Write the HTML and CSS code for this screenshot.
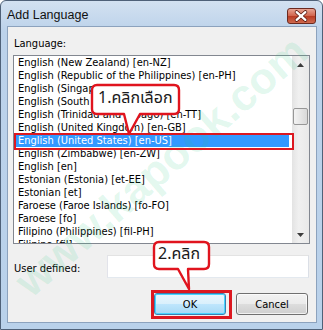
FILE: index.html
```html
<!DOCTYPE html>
<html lang="en">
<head>
  <meta charset="UTF-8">
  <title>Add Language</title>
  <meta name="viewport" content="width=device-width, initial-scale=1.0">
  <link rel="stylesheet" href="styles.css">
</head>
<body>
  <div class="window">
    <div class="titlebar">
      <span class="title">Add Language</span>
      <span class="close-btn">
        <svg width="29" height="16" viewBox="0 0 29 16">
          <path d="M10 4 L19 12 M19 4 L10 12" stroke="#5a1a12" stroke-width="4" stroke-linecap="round"/>
          <path d="M10 4 L19 12 M19 4 L10 12" stroke="#fff" stroke-width="2.4" stroke-linecap="round"/>
        </svg>
      </span>
    </div>

    <div class="client">
      <div class="field-label">Language:</div>
      <div class="listbox">
        <ul class="items">
          <li>English (New Zealand) [en-NZ]</li>
          <li>English (Republic of the Philippines) [en-PH]</li>
          <li>English (Singapore) [en-SG]</li>
          <li>English (South Africa) [en-ZA]</li>
          <li>English (Trinidad and Tobago) [en-TT]</li>
          <li>English (United Kingdom) [en-GB]</li>
          <li class="selected">English (United States) [en-US]</li>
          <li>English (Zimbabwe) [en-ZW]</li>
          <li>English [en]</li>
          <li>Estonian (Estonia) [et-EE]</li>
          <li>Estonian [et]</li>
          <li>Faroese (Faroe Islands) [fo-FO]</li>
          <li>Faroese [fo]</li>
          <li>Filipino (Philippines) [fil-PH]</li>
          <li>Filipino [fil]</li>
        </ul>
        <div class="scrollbar">
          <div class="sb-btn">
            <svg width="7" height="4" viewBox="0 0 7 4"><path d="M0 4 L3.5 0 L7 4 Z" fill="#3c3c3c"/></svg>
          </div>
          <div class="sb-track"><div class="sb-thumb"></div></div>
          <div class="sb-btn">
            <svg width="7" height="4" viewBox="0 0 7 4"><path d="M0 0 L7 0 L3.5 4 Z" fill="#3c3c3c"/></svg>
          </div>
        </div>
      </div>

      <div class="user-row">
        <label for="userDefined">User defined:</label>
        <input type="text" id="userDefined">
      </div>

      <div class="buttons">
        <button class="btn btn-default">OK</button>
        <button class="btn">Cancel</button>
      </div>
    </div>

    <!-- annotations over the dialog -->
    <div class="watermark">www.kapook.com</div>
    <div class="mark mark-row"></div>
    <div class="mark mark-ok"></div>

    <div class="callout callout-1">
      <svg width="92" height="54" viewBox="0 0 92 54">
        <path d="M7 2 H84 Q89 2 89 7 V26 Q89 31 84 31 H50 L39 51 L34 31 H7 Q2 31 2 26 V7 Q2 2 7 2 Z" fill="#fff" stroke="#e0141e" stroke-width="2.4" stroke-linejoin="round"/>
      </svg>
      <span class="callout-text">1.คลิกเลือก</span>
    </div>

    <div class="callout callout-2">
      <svg width="60" height="52" viewBox="0 0 60 52">
        <path d="M7 2 H52 Q57 2 57 7 V24 Q57 29 52 29 H36 L37 49 L26 29 H7 Q2 29 2 24 V7 Q2 2 7 2 Z" fill="#fff" stroke="#e0141e" stroke-width="2.4" stroke-linejoin="round"/>
      </svg>
      <span class="callout-text">2.คลิก</span>
    </div>
  </div>
</body>
</html>
```

FILE: styles.css
```css
body {
  margin: 0;
  padding: 0;
  background: #fff;
  font-family: 'DejaVu Sans Condensed', 'DejaVu Sans', sans-serif;
  font-size: 11px;
  color: #000;
}
.window {
  position: relative;
  width: 323px;
  height: 330px;
  box-sizing: border-box;
  border: 1px solid #4f6178;
  border-radius: 6px 6px 0 0;
  background: linear-gradient(#d3e1f1, #bcd2ea 30px, #b9d1ea);
  padding: 0 5px 6px 6px;
  display: flex;
  flex-direction: column;
  overflow: hidden;
}
.titlebar {
  height: 25px;
  display: flex;
  align-items: center;
  justify-content: space-between;
  flex-shrink: 0;
}
.title {
  font-family: 'Liberation Sans', Arial, sans-serif;
  font-size: 12.5px;
  color: #111;
  margin-top: 2px;
}
.close-btn {
  display: flex;
  width: 29px;
  height: 16px;
  margin-top: 4px;
  margin-right: 1px;
  border: 1px solid #6b2a20;
  border-radius: 3px;
  background: linear-gradient(#e8a493, #d0634b 50%, #b83a22 51%, #cf6a4f);
  box-sizing: border-box;
  align-items: center;
  justify-content: center;
}
.close-btn svg {
  display: block;
  margin-left: -1px;
}
.client {
  flex: 1;
  background: #f0f0f0;
  border: 1px solid #8ca2bd;
  padding: 10px 6px 0 5px;
  display: flex;
  flex-direction: column;
}
.field-label {
  height: 13px;
  line-height: 13px;
  margin-left: 1px;
}
.listbox {
  margin-top: 5px;
  height: 189px;
  box-sizing: border-box;
  border: 1px solid #828790;
  background: #fff;
  display: flex;
  overflow: hidden;
}
.items {
  list-style: none;
  margin: 0;
  padding: 0;
  flex: 1;
}
.items li {
  height: 13px;
  line-height: 13px;
  padding-left: 3px;
  margin: 0 3px 0 1px;
  white-space: nowrap;
}
.items li.selected {
  background: #3399ff;
  color: #fff;
}
.scrollbar {
  width: 17px;
  display: flex;
  flex-direction: column;
  background: linear-gradient(90deg, #e3e3e3, #f0f0f0 40%, #e9e9e9);
}
.sb-btn {
  height: 17px;
  display: flex;
  align-items: center;
  justify-content: center;
}
.sb-track {
  flex: 1;
  padding-top: 35px;
}
.sb-thumb {
  height: 17px;
  margin-left: 1px;
  width: 15px;
  box-sizing: border-box;
  border: 1px solid #979797;
  border-radius: 2px;
  background: linear-gradient(90deg, #f3f3f3, #e6e6e6 50%, #d8d8d8);
}
.user-row {
  margin-top: 11px;
  display: flex;
  align-items: center;
  justify-content: space-between;
}
.user-row label {
  margin-left: 1px;
  margin-top: 3px;
}
.user-row input {
  width: 202px;
  height: 23px;
  box-sizing: border-box;
  border: 1px solid #abadb3;
  border-top-color: #e3e3e3;
  border-left-color: #e2e3ea;
  border-right-color: #dbdfe6;
  border-bottom-color: #e3e9ef;
  background: #fff;
  margin: 0 1px 0 0;
  padding: 0;
  outline: none;
}
.buttons {
  margin-top: 15px;
  display: flex;
  justify-content: flex-end;
  gap: 10px;
  margin-right: 2px;
}
.btn {
  width: 72px;
  height: 22px;
  border: 1px solid #707070;
  border-radius: 3px;
  background: linear-gradient(#f2f2f2, #ebebeb 50%, #dddddd 51%, #cfcfcf);
  font-family: 'DejaVu Sans Condensed', 'DejaVu Sans', sans-serif;
  font-size: 11px;
  color: #000;
  padding: 0;
  box-shadow: inset 0 0 0 1px rgba(255,255,255,0.7);
}
.btn-default {
  border-color: #3c7fb1;
  background: linear-gradient(#eaf6fd, #d9f0fc 50%, #bee6fd 51%, #a7d9f5);
  box-shadow: inset 0 0 0 1px #48d5ff;
}
.watermark {
  position: absolute;
  left: -30px;
  top: 140px;
  width: 380px;
  text-align: center;
  font-family: 'Liberation Sans', Arial, sans-serif;
  font-weight: bold;
  font-size: 44px;
  line-height: 50px;
  color: rgba(40, 200, 130, 0.14);
  transform: rotate(-41deg);
  pointer-events: none;
}
.mark {
  position: absolute;
  box-sizing: border-box;
  border: 2.5px solid #dc1820;
  pointer-events: none;
}
.mark-row {
  left: 13px;
  top: 132px;
  width: 280px;
  height: 17px;
}
.mark-ok {
  left: 150px;
  top: 289px;
  width: 81px;
  height: 29px;
  border-width: 3px;
}
.callout {
  position: absolute;
  pointer-events: none;
}
.callout svg {
  display: block;
}
.callout-1 {
  left: 89px;
  top: 82px;
}
.callout-2 {
  left: 151px;
  top: 239px;
}
.callout-text {
  position: absolute;
  top: 5px;
  left: 8px;
  font-family: 'Noto Sans Thai', 'Noto Sans', 'DejaVu Sans', sans-serif;
  font-size: 16px;
  line-height: 20px;
  color: #1a1a1a;
  white-space: nowrap;
}
.callout-2 .callout-text {
  left: 6px;
  top: 4px;
}
```
